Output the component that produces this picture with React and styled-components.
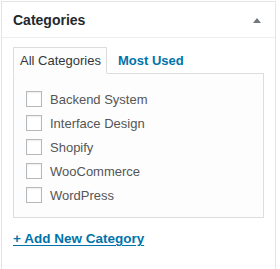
import React from "react";
import styled, { createGlobalStyle } from "styled-components";

const GlobalStyle = createGlobalStyle`
  body {
    margin: 0;
    background: #ffffff;
    font-family: "Liberation Sans", Arial, sans-serif;
  }
`;

const Postbox = styled.div`
  margin: 1px 4px 0 1px;
  height: 267px;
  border: 1px solid #e5e5e5;
  border-bottom: none;
  background: #ffffff;
  overflow: hidden;
`;

const Header = styled.div`
  display: flex;
  align-items: center;
  justify-content: space-between;
  height: 35px;
  padding: 0 11px 0 11px;
  border-bottom: 1px solid #eeeeee;
`;

const Title = styled.h2`
  margin: 0;
  font-size: 14px;
  font-weight: 700;
  color: #23282d;
`;

const Toggle = styled.span`
  width: 0;
  height: 0;
  margin-right: 3px;
  margin-top: 2px;
  border-left: 4px solid transparent;
  border-right: 4px solid transparent;
  border-bottom: 5px solid #72777c;
`;

const Inside = styled.div`
  padding: 9px 11px 0;
`;

const Tabs = styled.ul`
  display: flex;
  align-items: flex-end;
  gap: 10px;
  margin: 0;
  padding: 0;
  list-style: none;
  position: relative;
  z-index: 1;
  margin-bottom: -1px;
`;

const Tab = styled.li`
  height: 25px;
  display: flex;
  align-items: center;
  font-size: 13px;
  color: ${({ $active }) => ($active ? "#32373c" : "#0073aa")};
  font-weight: ${({ $active }) => ($active ? 400 : 600)};
  border: 1px solid ${({ $active }) => ($active ? "#dddddd" : "transparent")};
  border-bottom: 1px solid ${({ $active }) => ($active ? "#fdfdfd" : "transparent")};
  background: ${({ $active }) => ($active ? "#fdfdfd" : "transparent")};
  padding: ${({ $active }) => ($active ? "0 5px 0 6px" : "0")};
`;

const Panel = styled.div`
  border: 1px solid #dddddd;
  background: #fdfdfd;
  padding: 13px 12px 10px;
`;

const Row = styled.label`
  display: flex;
  align-items: center;
  height: 24px;
  font-size: 13px;
  color: #555555;
`;

const Box = styled.span`
  box-sizing: border-box;
  width: 16px;
  height: 16px;
  margin-right: 8px;
  border: 1px solid #b4b9be;
  background: #ffffff;
  box-shadow: inset 0 1px 2px rgba(0, 0, 0, 0.07);
`;

const AddLink = styled.a`
  display: inline-block;
  margin-top: 13px;
  font-size: 13.5px;
  font-weight: 700;
  color: #0073aa;
  text-decoration: underline;
  text-underline-offset: 2px;
`;

const categories = [
  "Backend System",
  "Interface Design",
  "Shopify",
  "WooCommerce",
  "WordPress",
];

export default function App() {
  return (
    <>
      <GlobalStyle />
      <Postbox>
        <Header>
          <Title>Categories</Title>
          <Toggle />
        </Header>
        <Inside>
          <Tabs>
            <Tab $active>All Categories</Tab>
            <Tab>Most Used</Tab>
          </Tabs>
          <Panel>
            {categories.map((name) => (
              <Row key={name}>
                <Box />
                {name}
              </Row>
            ))}
          </Panel>
          <AddLink>+ Add New Category</AddLink>
        </Inside>
      </Postbox>
    </>
  );
}
